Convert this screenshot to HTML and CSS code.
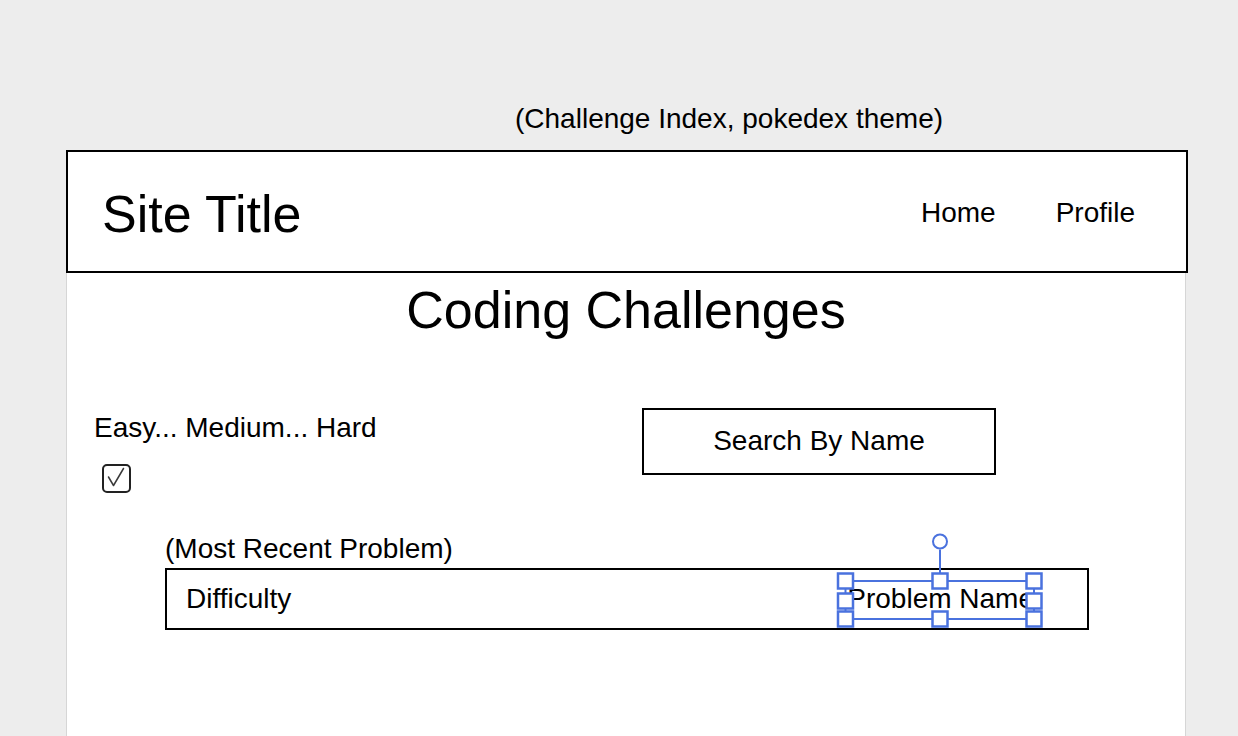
FILE: index.html
```html
<!DOCTYPE html>
<html lang="en">
<head>
<meta charset="utf-8">
<title>Challenge Index</title>
<link rel="stylesheet" href="styles.css">
</head>
<body>
<div class="stage">
  <p class="caption">(Challenge Index, pokedex theme)</p>
  <div class="frame">
    <header class="site-header">
      <div class="site-title">Site Title</div>
      <nav class="nav">
        <a class="nav-link" href="#">Home</a>
        <a class="nav-link" href="#">Profile</a>
      </nav>
    </header>
    <main class="panel">
      <h1 class="page-title">Coding Challenges</h1>
      <section class="controls">
        <div class="filters">
          <div class="difficulty-label">Easy... Medium... Hard</div>
          <span class="checkbox">
            <svg class="check-icon" width="25" height="25" viewBox="0 0 25 25"><path d="M4.5 11 L9.5 19.5 L19.5 2.5" fill="none" stroke="#3a3a3a" stroke-width="1.5" stroke-linecap="round" stroke-linejoin="round"/></svg>
          </span>
        </div>
        <div class="search">Search By Name</div>
      </section>
      <section class="recent">
        <div class="recent-label">(Most Recent Problem)</div>
        <div class="problem-row">
          <span class="problem-difficulty">Difficulty</span>
          <span class="problem-name">Problem Name
            <svg class="selection" width="210" height="100" viewBox="0 0 210 100">
              <g fill="none" stroke="#4a72de" stroke-width="2">
                <rect x="10.5" y="50" width="188.5" height="38"/>
                <line x1="105" y1="18.5" x2="105" y2="43"/>
                <circle cx="105" cy="10.5" r="7" fill="#fff"/>
              </g>
              <g fill="#fff" stroke="#4a72de" stroke-width="2.5">
                <rect x="3" y="42.5" width="15" height="15"/>
                <rect x="97.5" y="42.5" width="15" height="15"/>
                <rect x="191.5" y="42.5" width="15" height="15"/>
                <rect x="3" y="62.5" width="15" height="15"/>
                <rect x="191.5" y="62.5" width="15" height="15"/>
                <rect x="3" y="80.5" width="15" height="15"/>
                <rect x="97.5" y="80.5" width="15" height="15"/>
                <rect x="191.5" y="80.5" width="15" height="15"/>
              </g>
            </svg>
          </span>
        </div>
      </section>
    </main>
  </div>
</div>
</body>
</html>
```
FILE: styles.css
```css
* {
  box-sizing: border-box;
}

html, body {
  margin: 0;
  padding: 0;
  height: 100%;
}

body {
  background: #ededed;
  font-family: "Liberation Sans", Arial, Helvetica, sans-serif;
  color: #000;
  overflow: hidden;
}

.stage {
  display: flex;
  flex-direction: column;
  min-height: 100vh;
}

.caption {
  margin: 0;
  height: 150px;
  padding: 103px 0 0 515px;
  font-size: 28px;
  line-height: 32px;
}

.frame {
  margin-left: 66px;
  width: 1122px;
  flex: 1;
  display: flex;
  flex-direction: column;
}

.site-header {
  height: 123px;
  border: 2px solid #000;
  background: #fff;
  display: flex;
  align-items: center;
  justify-content: space-between;
  padding: 5px 51px 0 34px;
}

.site-title {
  font-size: 52px;
  line-height: 60px;
}

.nav {
  display: flex;
  gap: 60px;
  padding-bottom: 2px;
}

.nav-link {
  color: #000;
  text-decoration: none;
  font-size: 28px;
  line-height: 32px;
}

.panel {
  width: 1120px;
  flex: 1;
  background: #fff;
  border-left: 1px solid #d6d6d6;
  border-right: 1px solid #d6d6d6;
}

.page-title {
  margin: 7px 0 0;
  text-align: center;
  font-weight: normal;
  font-size: 52px;
  line-height: 60px;
}

.controls {
  display: flex;
  align-items: flex-start;
  margin-top: 68px;
  padding-left: 27px;
}

.filters {
  width: 548px;
  display: flex;
  flex-direction: column;
  align-items: flex-start;
}

.difficulty-label {
  font-size: 28px;
  line-height: 32px;
  padding-top: 4px;
}

.checkbox {
  margin: 20px 0 0 8px;
  width: 29px;
  height: 29px;
  border: 2px solid #222;
  border-radius: 5px;
  display: block;
}

.check-icon {
  display: block;
}

.search {
  width: 354px;
  height: 67px;
  border: 2px solid #000;
  display: flex;
  align-items: center;
  justify-content: center;
  font-size: 28px;
  line-height: 32px;
  padding-bottom: 1px;
}

.recent {
  margin-top: 40px;
  padding-left: 98px;
}

.recent-label {
  font-size: 28px;
  line-height: 32px;
}

.problem-row {
  margin-top: 3px;
  width: 924px;
  height: 62px;
  border: 2px solid #000;
  display: flex;
  align-items: flex-start;
  justify-content: space-between;
  padding: 13px 53px 0 19px;
  font-size: 28px;
  line-height: 32px;
}

.problem-name {
  position: relative;
  white-space: nowrap;
}

.selection {
  position: absolute;
  left: -12px;
  top: -52px;
  display: block;
}
```
